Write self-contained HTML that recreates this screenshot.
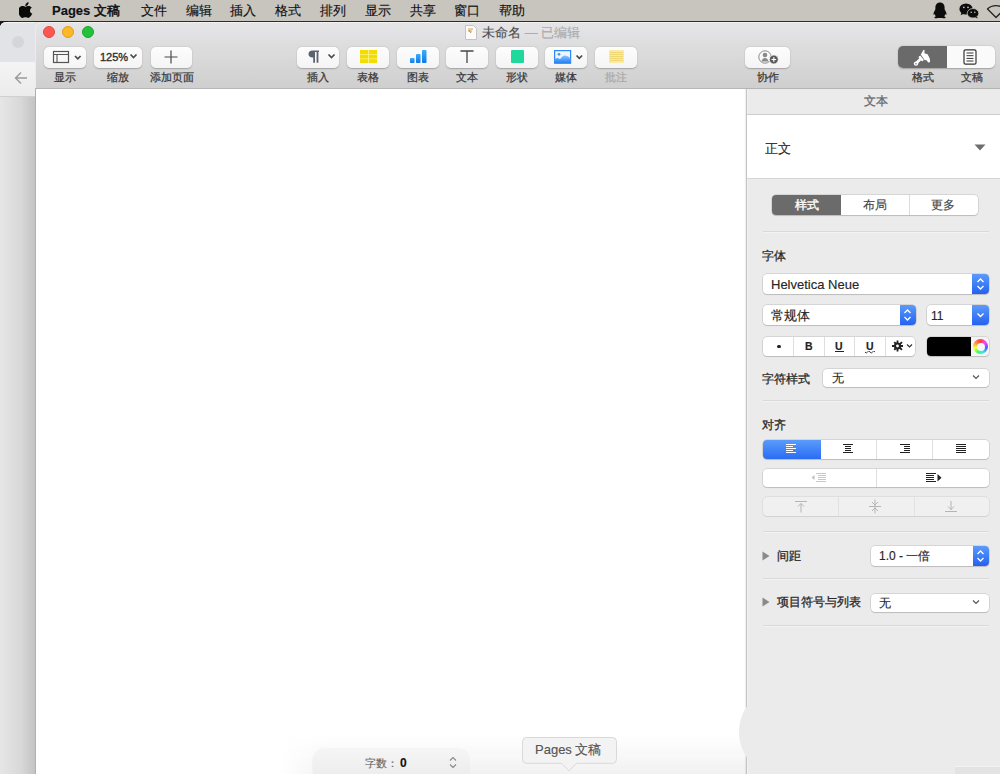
<!DOCTYPE html>
<html><head><meta charset="utf-8">
<style>
*{box-sizing:border-box;margin:0;padding:0}
html,body{width:1000px;height:774px;overflow:hidden;position:relative;font-family:"Liberation Sans",sans-serif;background:#e4e4e4;color:#262626;-webkit-text-stroke-width:0.15px}
.a{position:absolute}
.mb{left:0;top:0;width:1000px;height:22px;background:#c8c4be;border-bottom:1px solid #2e2c2a}
.mi{position:absolute;top:3px;font-size:13px;line-height:15px;color:#111;font-weight:500;white-space:nowrap}
/* behind window */
.bw{left:0;top:22px;width:35px;height:752px;border-top-left-radius:6px;background:linear-gradient(90deg,#e6e6e6,#d8d8d8 60%,#c3c3c3)}
.bwtop{left:0;top:22px;width:35px;height:40px;background:#e2e3e6;border-top-left-radius:6px;border-top:1px solid #f6f6f6}
.bwtb{left:0;top:62px;width:35px;height:35px;background:linear-gradient(#f4f4f4,#ececec);border-bottom:1px solid #d0d0d0}
/* front window */
.fw{left:35px;top:22px;width:965px;height:752px;background:#fff;border-left:1px solid #b0b0b0;border-top-left-radius:5px}
.tb{left:35px;top:22px;width:965px;height:67px;border-top-left-radius:5px;box-shadow:inset 1px 0 0 #ececec;background:linear-gradient(#e5e4e7,#d9d9d9 55%,#cfcfcf);border-bottom:1px solid #b6b6b6;border-top:1px solid #f3f1f1}
.tl{width:12px;height:12px;border-radius:50%;top:26px}
.btn{position:absolute;top:47px;height:21px;width:42px;background:linear-gradient(#fdfdfd,#f4f4f4);border-radius:5px;box-shadow:0 0.5px 1.5px rgba(0,0,0,.25)}
.lbl{position:absolute;top:71px;font-size:10.5px;line-height:13px;color:#3a3a3a;font-weight:500;-webkit-text-stroke-width:0.25px;text-align:center;white-space:nowrap}
.doc{left:36px;top:89px;width:710px;height:685px;background:#fff}
.sb{left:746px;top:89px;width:254px;height:685px;background:#ebebeb;border-left:1px solid #c4c4c4;box-shadow:-1px 0 1px rgba(0,0,0,.06),inset 1px 0 0 #f2f2f2}
.t11{font-size:11px;line-height:13px}
.t12{font-size:12px;line-height:14px}
.t13{font-size:13px;line-height:15px}
.pop{position:absolute;background:#fff;border-radius:4px;box-shadow:0 0 0 0.5px rgba(0,0,0,.18),0 1px 1px rgba(0,0,0,.12)}
.blue{position:absolute;top:0;right:0;bottom:0;background:linear-gradient(#5b9bfb,#2462ef);border-radius:0 4px 4px 0}
.hr{position:absolute;left:763px;width:226px;height:1px;background:#d9d9d9;box-shadow:0 1px 0 #f3f3f3}
.seg{position:absolute;background:#fff;border-radius:4px;box-shadow:0 0 0 0.5px rgba(0,0,0,.18),0 1px 1px rgba(0,0,0,.12)}
.div{position:absolute;top:0;bottom:0;width:1px;background:#dedede}
</style></head><body>
<!-- menubar -->
<div class="a mb"></div>
<svg class="a" style="left:19px;top:2px" width="14" height="16" viewBox="0 0 14 16"><path d="M9.6 0.3c0.1 1-0.3 2-0.9 2.7-0.6 0.7-1.5 1.2-2.4 1.1-0.1-1 0.3-2 0.9-2.6 0.6-0.7 1.6-1.2 2.4-1.2z" fill="#0a0a0a"/><path d="M13.3 11.6c-0.4 0.9-0.6 1.3-1.1 2-0.7 1-1.7 2.3-2.9 2.3-1.1 0-1.4-0.7-2.9-0.7s-1.8 0.7-2.9 0.7C2.3 15.9 1.4 14.7 0.7 13.7-1.2 10.9-1.4 7.6 0.2 5.7 1 4.7 2.3 4.1 3.5 4.1c1.3 0 2.1 0.7 3.1 0.7 1 0 1.6-0.7 3.1-0.7 1.1 0 2.3 0.6 3.1 1.6-2.7 1.5-2.3 5.3 0.5 5.9z" fill="#0a0a0a"/></svg>
<svg class="a" style="left:932px;top:2px" width="16" height="17" viewBox="0 0 16 17"><path d="M8 0.5c-3 0-4.6 2.3-4.6 5 0 1.1 0.1 1.6-0.3 2.4C2.3 9.4 1.3 10.9 1.5 12.3c0.2 0.8 0.8 0.2 1.1-0.3 0.2 0.9 0.7 1.7 1.3 2.3-0.8 0.4-1.7 0.8-1.4 1.7 0.3 0.5 2.3 0.4 3.5 0.1 0.7-0.2 1.3-0.2 2-0.2s1.3 0 2 0.2c1.2 0.3 3.2 0.4 3.5-0.1 0.3-0.9-0.6-1.3-1.4-1.7 0.6-0.6 1.1-1.4 1.3-2.3 0.3 0.5 0.9 1.1 1.1 0.3 0.2-1.4-0.8-2.9-1.6-4.4-0.4-0.8-0.3-1.3-0.3-2.4 0-2.7-1.6-5-4.6-5z" fill="#0d0d0d"/></svg>
<svg class="a" style="left:959px;top:2px" width="21" height="17" viewBox="0 0 21 17"><ellipse cx="7" cy="7" rx="6.6" ry="5.6" fill="#0d0d0d"/><path d="M2.5 10.5l-0.8 2.8 3-1.6z" fill="#0d0d0d"/><circle cx="4.8" cy="5.3" r="0.9" fill="#c8c4be"/><circle cx="9" cy="5.3" r="0.9" fill="#c8c4be"/><ellipse cx="14" cy="11.3" rx="5.8" ry="4.8" fill="#0d0d0d" stroke="#c8c4be" stroke-width="0.8"/><path d="M17.8 14.5l1 2-2.6-1.2z" fill="#0d0d0d"/><circle cx="12.2" cy="10.2" r="0.8" fill="#c8c4be"/><circle cx="15.8" cy="10.2" r="0.8" fill="#c8c4be"/></svg>
<svg class="a" style="left:986px;top:3px" width="20" height="16" viewBox="0 0 20 16"><path d="M1.5 6c4.5-4.5 12.5-4.5 17 0L10 14.5z" fill="none" stroke="#222" stroke-width="1.3" stroke-linejoin="round"/></svg>
<div class="mi" style="left:52px"><b>Pages</b> <span style="-webkit-text-stroke-width:0.5px">文稿</span></div>
<div class="mi" style="left:141px">文件</div>
<div class="mi" style="left:186px">编辑</div>
<div class="mi" style="left:230px">插入</div>
<div class="mi" style="left:275px">格式</div>
<div class="mi" style="left:320px">排列</div>
<div class="mi" style="left:365px">显示</div>
<div class="mi" style="left:410px">共享</div>
<div class="mi" style="left:454px">窗口</div>
<div class="mi" style="left:499px">帮助</div>

<!-- behind window -->
<div class="a" style="left:0;top:21px;width:8px;height:8px;background:#1a1a1a"></div>
<div class="a bw"></div>
<div class="a bwtop"></div>
<div class="a bwtb"></div>
<div class="a" style="left:12px;top:36px;width:12px;height:12px;border-radius:50%;background:#d5d6d9"></div>
<svg class="a" style="left:13px;top:71px" width="16" height="14" viewBox="0 0 16 14"><path d="M14 7H2.5M8 1.5L2.5 7 8 12.5" fill="none" stroke="#9a9a9a" stroke-width="1.4"/></svg>

<!-- front window -->
<div class="a fw"></div>
<div class="a tb"></div>
<div class="a tl" style="left:43px;background:#fc5753;border:0.5px solid #df4744"></div>
<div class="a tl" style="left:62px;background:#fcb827;border:0.5px solid #e09e1c"></div>
<div class="a tl" style="left:82px;background:#22c23c;border:0.5px solid #1ca631"></div>

<!-- title -->
<svg class="a" style="left:465px;top:25px" width="12" height="15" viewBox="0 0 12 15"><path d="M0.5 0.5h8l3 3v11h-11z" fill="#fbfbfb" stroke="#c4c4c4"/><path d="M3 4h5M3 6h4" stroke="#e0a040" stroke-width="1.2"/><path d="M4 5l2 3" stroke="#b08a50" stroke-width="1"/></svg>
<div class="a t13" style="left:482px;top:25px;color:#4d4d4d;white-space:nowrap">未命名 <span style="color:#ababab">— 已编辑</span></div>

<!-- toolbar buttons -->
<div class="btn" style="left:44px"></div>
<svg class="a" style="left:52px;top:50px" width="32" height="14" viewBox="0 0 32 14"><rect x="1.5" y="1.5" width="15" height="11" fill="none" stroke="#555" stroke-width="1.2"/><path d="M1.5 4.5h15M5 4.5v8" stroke="#555" stroke-width="1.1"/><path d="M23 6l2.8 2.8L28.6 6" fill="none" stroke="#4a4a4a" stroke-width="1.7"/></svg>
<div class="lbl" style="left:44px;width:42px">显示</div>

<div class="btn" style="left:94px;width:48px"></div>
<div class="a" style="left:100px;top:51px;font-size:11px;line-height:13px;color:#2e2e2e;-webkit-text-stroke-width:0.35px">125%</div>
<svg class="a" style="left:129px;top:53px" width="10" height="7" viewBox="0 0 10 7"><path d="M1.5 1.5l3 3 3-3" fill="none" stroke="#4a4a4a" stroke-width="1.7"/></svg>
<div class="lbl" style="left:94px;width:48px">缩放</div>

<div class="btn" style="left:151px;width:41px"></div>
<svg class="a" style="left:164px;top:50px" width="14" height="14" viewBox="0 0 14 14"><path d="M7 0.5v13M0.5 7h13" stroke="#4a4a4a" stroke-width="1.2"/></svg>
<div class="lbl" style="left:141px;width:61px">添加页面</div>

<div class="btn" style="left:297px"></div>
<svg class="a" style="left:308px;top:50px" width="12" height="13" viewBox="0 0 12 13"><path d="M11 0.5H4.3C2 0.5 0.5 2 0.5 4s1.5 3.6 3.8 3.6H5.2V12.8h1.8V2.1h1.6V12.8h1.8V2.1H11z" fill="#5b6372"/></svg>
<svg class="a" style="left:327px;top:53px" width="10" height="7" viewBox="0 0 10 7"><path d="M1.5 1.5l3 3 3-3" fill="none" stroke="#4a4a4a" stroke-width="1.7"/></svg>
<div class="lbl" style="left:297px;width:42px">插入</div>

<div class="btn" style="left:347px"></div>
<svg class="a" style="left:360px;top:50px" width="17" height="13" viewBox="0 0 17 13"><rect width="17" height="13" fill="#fbf27a"/><g fill="#f3dc00"><rect x="0" y="0" width="8" height="4"/><rect x="9" y="0" width="8" height="4"/><rect x="0" y="4.8" width="8" height="3.6"/><rect x="9" y="4.8" width="8" height="3.6"/><rect x="0" y="9.2" width="8" height="3.8"/><rect x="9" y="9.2" width="8" height="3.8"/></g></svg>
<div class="lbl" style="left:347px;width:42px">表格</div>

<div class="btn" style="left:397px"></div>
<svg class="a" style="left:410px;top:50px" width="17" height="13" viewBox="0 0 17 13"><defs><linearGradient id="bg" x1="0" y1="0" x2="0" y2="1"><stop offset="0" stop-color="#3aaeff"/><stop offset="1" stop-color="#0b7ae6"/></linearGradient></defs><rect x="0" y="8" width="4.5" height="5" rx="0.8" fill="url(#bg)"/><rect x="6" y="4" width="4.5" height="9" rx="0.8" fill="url(#bg)"/><rect x="12" y="0" width="4.5" height="13" rx="0.8" fill="url(#bg)"/></svg>
<div class="lbl" style="left:397px;width:42px">图表</div>

<div class="btn" style="left:446px"></div>
<svg class="a" style="left:460px;top:50px" width="14" height="13" viewBox="0 0 14 13"><path d="M0.5 1h13M7 1v12" stroke="#474747" stroke-width="1.3"/></svg>
<div class="lbl" style="left:446px;width:42px">文本</div>

<div class="btn" style="left:496px"></div>
<div class="a" style="left:511px;top:50px;width:12.5px;height:13px;background:#1fd89b;border-radius:1px"></div>
<div class="lbl" style="left:496px;width:42px">形状</div>

<div class="btn" style="left:545px"></div>
<svg class="a" style="left:554px;top:50px" width="30" height="14" viewBox="0 0 30 14"><defs><linearGradient id="mg" x1="0" y1="0" x2="0" y2="1"><stop offset="0" stop-color="#8cc4ff"/><stop offset="1" stop-color="#1f7ff2"/></linearGradient></defs><rect x="0.6" y="0.6" width="16" height="12.6" fill="#edf5ff" stroke="#3088f5" stroke-width="1.2"/><path d="M0.6 13.2V9.5Q3 6.8 6 9.3Q8.5 5 11.5 5.5Q14.5 6 16.6 8.5v4.7z" fill="url(#mg)"/><circle cx="5" cy="4.3" r="1.4" fill="#4a95f2"/><path d="M22.5 5.5l2.8 2.8 2.8-2.8" fill="none" stroke="#4a4a4a" stroke-width="1.7"/></svg>
<div class="lbl" style="left:545px;width:42px">媒体</div>

<div class="btn" style="left:595px"></div>
<svg class="a" style="left:609px;top:50px" width="15" height="13" viewBox="0 0 15 13"><rect width="15" height="13" fill="#f8eba6"/><path d="M1 2.5h13M1 4.5h13M1 6.5h13M1 8.5h13M1 10.5h13" stroke="#eed772" stroke-width="1"/></svg>
<div class="lbl" style="left:595px;width:42px;color:#a9a9a9">批注</div>

<div class="btn" style="left:745px;width:45px"></div>
<svg class="a" style="left:758px;top:49px" width="22" height="16" viewBox="0 0 22 16"><circle cx="7" cy="8" r="6.2" fill="none" stroke="#8a8a8a" stroke-width="1"/><circle cx="7" cy="6" r="2.3" fill="#8a8a8a"/><path d="M3.5 12.5c0.5-2.5 2-3.6 3.5-3.6s3 1.1 3.5 3.6" fill="#8a8a8a"/><circle cx="15.8" cy="10.5" r="4.5" fill="#5c5c5c" stroke="#fafafa" stroke-width="0.8"/><path d="M15.8 8.2v4.6M13.5 10.5h4.6" stroke="#fff" stroke-width="1.2"/></svg>
<div class="lbl" style="left:745px;width:45px">协作</div>

<div class="a" style="left:898px;top:46px;width:97px;height:21.5px;border-radius:5px;background:#fafafa;box-shadow:0 0.5px 1.5px rgba(0,0,0,.25)"></div>
<div class="a" style="left:898px;top:46px;width:49px;height:21.5px;border-radius:5px 0 0 5px;background:#6a6a6a"></div>
<svg class="a" style="left:908px;top:46px" width="30" height="22" viewBox="0 0 30 22"><path d="M12.8 8.4L15.2 4.2Q16 3.3 16.6 4.2L16.4 7.2L19.6 8.2L21.8 12.5L22.1 15.8Q21.2 17.3 19.8 16L18.6 14.3L16.6 14Z" fill="#fff"/><path d="M10.4 10.9L12.2 9.4L15.9 13.9L14 15.6Z" fill="#fff"/><path d="M11.8 13.6L8.3 17.3" stroke="#fff" stroke-width="2.8" stroke-linecap="round"/><circle cx="8" cy="17.6" r="2.2" fill="#fff"/><circle cx="7.9" cy="17.8" r="0.7" fill="#6a6a6a"/></svg>
<svg class="a" style="left:963px;top:49px" width="14" height="16" viewBox="0 0 14 16"><rect x="1" y="0.8" width="12" height="14.4" rx="1.5" fill="#fff" stroke="#333" stroke-width="1.2"/><path d="M3.5 4h7M3.5 6.7h7M3.5 9.4h7M3.5 12h7" stroke="#333" stroke-width="1"/></svg>
<div class="lbl" style="left:898px;width:49px">格式</div>
<div class="lbl" style="left:947px;width:50px">文稿</div>

<div class="a doc"></div>
<div class="a" style="left:280px;top:735px;width:466px;height:39px;background:linear-gradient(rgba(230,230,230,0),rgba(232,232,232,.6));-webkit-mask-image:linear-gradient(90deg,transparent,#000 50px)"></div>
<!-- word count pill -->
<div class="a" style="left:313px;top:749px;width:156px;height:32px;border-radius:12px;background:linear-gradient(#f5f5f5,#ebebeb);box-shadow:0 0 1.5px rgba(0,0,0,.12)"></div>
<div class="a t11" style="left:365px;top:757px;color:#6a6a6a;white-space:nowrap">字数：<b style="color:#111;font-size:12px;margin-left:2px">0</b></div>
<svg class="a" style="left:448px;top:756px" width="10" height="13" viewBox="0 0 10 13"><path d="M2 4.5l3-3 3 3M2 8.5l3 3 3-3" fill="none" stroke="#8a8a8a" stroke-width="1.1"/></svg>
<!-- tooltip -->
<svg class="a" style="left:520px;top:735px" width="99" height="38" viewBox="0 0 99 38"><path d="M6.5 2.5h86a4 4 0 0 1 4 4v17.8a4 4 0 0 1-4 4H56.5l-7.5 7.5-7.5-7.5H6.5a4 4 0 0 1-4-4V6.5a4 4 0 0 1 4-4z" fill="#f3f3f3" stroke="#d9d9d9" stroke-width="1"/></svg>
<div class="a t13" style="left:535px;top:742px;color:#555;white-space:nowrap">Pages 文稿</div>
<div class="a sb"></div>
<!-- sidebar -->
<div class="a" style="left:749px;top:95px;width:253px;text-align:center;color:#6a6a6a;font-size:11.5px;line-height:13px;-webkit-text-stroke-width:0.3px">文本</div>
<div class="a" style="left:747px;top:114px;width:253px;height:65px;background:#fff;border-top:1px solid #cdcdcd;border-bottom:1px solid #d6d6d6"></div>
<div class="a t13" style="left:765px;top:141px;color:#2a2a2a">正文</div>
<svg class="a" style="left:974px;top:144px" width="12" height="7" viewBox="0 0 12 7"><path d="M0.5 0.5h11L6 6.5z" fill="#6e6e6e"/></svg>

<div class="seg" style="left:772px;top:195px;width:206px;height:20px"></div>
<div class="a" style="left:772px;top:195px;width:69px;height:20px;background:#6b6b6b;border-radius:4px 0 0 4px"></div>
<div class="a" style="left:909px;top:195px;width:1px;height:20px;background:#dcdcdc"></div>
<div class="a t12" style="left:772px;top:198px;width:69px;text-align:center;color:#fff;-webkit-text-stroke-width:0.35px">样式</div>
<div class="a t12" style="left:841px;top:198px;width:68px;text-align:center;color:#444">布局</div>
<div class="a t12" style="left:908px;top:198px;width:69px;text-align:center;color:#444">更多</div>
<div class="hr" style="top:231px"></div>

<div class="a t12" style="left:762px;top:249px;-webkit-text-stroke-width:0.3px;color:#2a2a2a">字体</div>
<div class="pop" style="left:763px;top:273.5px;width:226px;height:20px"><div class="blue" style="width:17px"></div></div>
<div class="a t13" style="left:771px;top:277px;color:#262626">Helvetica Neue</div>
<svg class="a" style="left:975px;top:277px" width="11" height="14" viewBox="0 0 11 14"><path d="M2.5 5l3-3 3 3M2.5 9l3 3 3-3" fill="none" stroke="#fff" stroke-width="1.3"/></svg>

<div class="pop" style="left:763px;top:305px;width:153px;height:20px"><div class="blue" style="width:16px"></div></div>
<div class="a t13" style="left:771px;top:308px;color:#262626">常规体</div>
<svg class="a" style="left:902px;top:308px" width="11" height="14" viewBox="0 0 11 14"><path d="M2.5 5l3-3 3 3M2.5 9l3 3 3-3" fill="none" stroke="#fff" stroke-width="1.3"/></svg>
<div class="pop" style="left:927px;top:305px;width:62px;height:20px"><div class="blue" style="width:17px"></div></div>
<div class="a t12" style="left:931px;top:309px;color:#262626">11</div>
<svg class="a" style="left:975px;top:310px" width="11" height="10" viewBox="0 0 11 10"><path d="M2.5 3.5l3 3 3-3" fill="none" stroke="#fff" stroke-width="1.4"/></svg>

<div class="seg" style="left:763px;top:337px;width:152px;height:19px"></div>
<div class="div" style="left:793px;top:337px;height:19px"></div>
<div class="div" style="left:824px;top:337px;height:19px"></div>
<div class="div" style="left:854px;top:337px;height:19px"></div>
<div class="div" style="left:885px;top:337px;height:19px"></div>
<div class="a" style="left:777.2px;top:344.6px;width:3.6px;height:3.6px;border-radius:50%;background:#222"></div>
<div class="a" style="left:805px;top:340px;font-size:10.5px;line-height:12px;font-weight:bold;color:#222">B</div>
<div class="a" style="left:835px;top:340px;font-size:10.5px;line-height:12px;font-weight:bold;color:#222">U</div><div class="a" style="left:835px;top:351px;width:9px;height:1.2px;background:#222"></div>
<div class="a" style="left:866px;top:340px;font-size:10.5px;line-height:12px;font-weight:bold;color:#222">U</div>
<svg class="a" style="left:865px;top:351px" width="10" height="3" viewBox="0 0 10 3"><path d="M0 1q1.25 2 2.5 0t2.5 0 2.5 0 2.5 0" fill="none" stroke="#222" stroke-width="0.9"/></svg>
<svg class="a" style="left:891px;top:339px" width="24" height="14" viewBox="0 0 24 14"><g fill="#222"><circle cx="6.5" cy="7" r="3.6"/><path d="M5.6 1.5h1.8v11h-1.8zM1 6.1h11v1.8H1z"/><path d="M2.6 3.8l1.3-1.3 7.7 7.7-1.3 1.3zM10.3 2.5l1.3 1.3-7.7 7.7-1.3-1.3z"/></g><circle cx="6.5" cy="7" r="1.4" fill="#fff"/><path d="M16 5.5l2.5 2.5 2.5-2.5" fill="none" stroke="#333" stroke-width="1.2"/></svg>

<div class="seg" style="left:927px;top:337px;width:62px;height:19px;background:#f4f4f4"></div>
<div class="a" style="left:927px;top:337px;width:44px;height:19px;background:#000;border-radius:4px 0 0 4px"></div>
<div class="a" style="left:973px;top:339px;width:15px;height:15px;border-radius:50%;background:conic-gradient(#ff4040,#ff40ff,#4060ff,#40e0ff,#40ff60,#ffff40,#ff9040,#ff4040)"></div><div class="a" style="left:976.5px;top:342.5px;width:8px;height:8px;border-radius:50%;background:#f6f6f6"></div>

<div class="a t12" style="left:762px;top:372px;color:#2a2a2a;-webkit-text-stroke-width:0.3px;">字符样式</div>
<div class="pop" style="left:823px;top:369px;width:166px;height:18px"></div>
<div class="a t12" style="left:832px;top:371px;color:#262626">无</div>
<svg class="a" style="left:971px;top:373px" width="10" height="8" viewBox="0 0 10 8"><path d="M2 2.5l3 3 3-3" fill="none" stroke="#555" stroke-width="1.2"/></svg>
<div class="hr" style="top:400px"></div>

<div class="a t12" style="left:762px;top:418px;-webkit-text-stroke-width:0.3px;color:#2a2a2a">对齐</div>
<div class="seg" style="left:763px;top:440px;width:226px;height:19px"></div>
<div class="a" style="left:763px;top:440px;width:58px;height:19px;background:linear-gradient(#5a9cfb,#2a6cf2);border-radius:4px 0 0 4px"></div>
<div class="div" style="left:876px;top:440px;height:19px"></div>
<div class="div" style="left:932px;top:440px;height:19px"></div>
<svg class="a" style="left:786px;top:444px" width="11" height="10" viewBox="0 0 11 10"><path d="M0 0.5h10M0 2.5h7M0 4.5h10M0 6.5h7M0 8.5h10" stroke="#fff" stroke-width="1"/></svg>
<svg class="a" style="left:843px;top:444px" width="11" height="10" viewBox="0 0 11 10"><path d="M0 0.5h10M2 2.5h6M2 4.5h6M2 6.5h6M0 8.5h10" stroke="#222" stroke-width="1.1"/></svg>
<svg class="a" style="left:900px;top:444px" width="11" height="10" viewBox="0 0 11 10"><path d="M0 0.5h10M4 2.5h6M4 4.5h6M4 6.5h6M0 8.5h10" stroke="#222" stroke-width="1.1"/></svg>
<svg class="a" style="left:956px;top:444px" width="11" height="10" viewBox="0 0 11 10"><path d="M0 0.5h10M0 2.5h10M0 4.5h10M0 6.5h10M0 8.5h10" stroke="#222" stroke-width="1.1"/></svg>

<div class="seg" style="left:763px;top:469px;width:226px;height:18px"></div>
<div class="div" style="left:876px;top:469px;height:18px"></div>
<svg class="a" style="left:811px;top:473px" width="16" height="10" viewBox="0 0 16 10"><path d="M0.5 4.5l3-2.5v5z" fill="#c0c0c0"/><path d="M5 0.5h10M7 2.5h8M7 4.5h8M7 6.5h8M5 8.5h10" stroke="#c8c8c8" stroke-width="1"/></svg>
<svg class="a" style="left:926px;top:473px" width="17" height="10" viewBox="0 0 17 10"><path d="M0 0.5h10M0 2.5h8M0 4.5h8M0 6.5h8M0 8.5h10" stroke="#222" stroke-width="1"/><path d="M11.5 1l4 3.7-4 3.7z" fill="#222"/></svg>

<div class="seg" style="left:763px;top:497px;width:226px;height:19px;background:#f0f0f0;box-shadow:0 0 0 0.5px rgba(0,0,0,.1),0 1px 1px rgba(0,0,0,.06)"></div>
<div class="div" style="left:838px;top:497px;height:19px;background:#e2e2e2"></div>
<div class="div" style="left:914px;top:497px;height:19px;background:#e2e2e2"></div>
<svg class="a" style="left:794px;top:500px" width="14" height="13" viewBox="0 0 14 13"><path d="M1 1.5h12M7 3.5v9M4 6.5l3-3 3 3" fill="none" stroke="#b5b5b5" stroke-width="1"/></svg>
<svg class="a" style="left:868px;top:499px" width="14" height="15" viewBox="0 0 14 15"><path d="M1 7.5h12M7 0.5v14M4 3l3 3 3-3M4 12l3-3 3 3" fill="none" stroke="#b5b5b5" stroke-width="1"/></svg>
<svg class="a" style="left:944px;top:500px" width="14" height="13" viewBox="0 0 14 13"><path d="M1 11.5h12M7 1v9M4 6.5l3 3 3-3" fill="none" stroke="#b5b5b5" stroke-width="1"/></svg>
<div class="hr" style="top:531px"></div>

<svg class="a" style="left:762px;top:551px" width="8" height="10" viewBox="0 0 8 10"><path d="M0.5 0.5l7 4.5-7 4.5z" fill="#8a8a8a"/></svg>
<div class="a t12" style="left:777px;top:549px;-webkit-text-stroke-width:0.3px;color:#2a2a2a">间距</div>
<div class="pop" style="left:871px;top:546px;width:118px;height:20px"><div class="blue" style="width:16px"></div></div>
<div class="a t12" style="left:879px;top:549px;color:#262626">1.0 - 一倍</div>
<svg class="a" style="left:975px;top:549px" width="11" height="14" viewBox="0 0 11 14"><path d="M2.5 5l3-3 3 3M2.5 9l3 3 3-3" fill="none" stroke="#fff" stroke-width="1.3"/></svg>
<div class="hr" style="top:578px"></div>

<svg class="a" style="left:762px;top:597px" width="8" height="10" viewBox="0 0 8 10"><path d="M0.5 0.5l7 4.5-7 4.5z" fill="#8a8a8a"/></svg>
<div class="a t12" style="left:777px;top:595px;-webkit-text-stroke-width:0.3px;color:#2a2a2a">项目符号与列表</div>
<div class="pop" style="left:871px;top:594px;width:118px;height:18px"></div>
<div class="a t12" style="left:879px;top:596px;color:#262626">无</div>
<svg class="a" style="left:971px;top:598px" width="10" height="8" viewBox="0 0 10 8"><path d="M2 2.5l3 3 3-3" fill="none" stroke="#555" stroke-width="1.2"/></svg>
<div class="hr" style="top:625px"></div>

<div class="a" style="left:955px;top:766px;width:45px;height:8px;background:#e3e3e3;border-top:1px solid #f2f2f2"></div>
<!-- watermark circle -->
<div class="a" style="left:739px;top:686px;width:92px;height:92px;border-radius:50%;background:#ebebeb"></div>
</body></html>
